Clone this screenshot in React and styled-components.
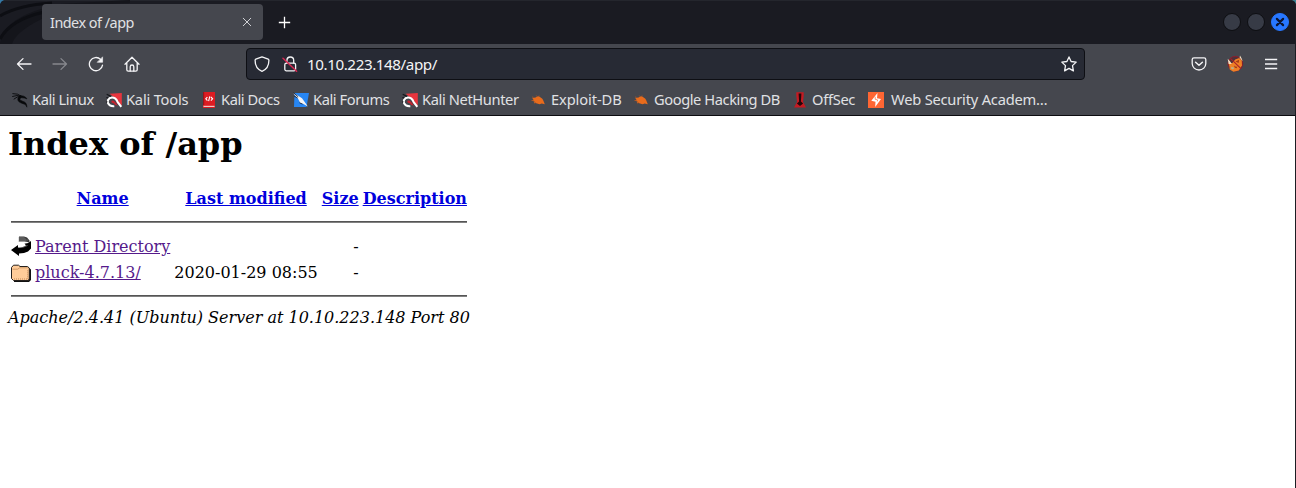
import React from "react";
import styled, { createGlobalStyle } from "styled-components";

const GlobalStyle = createGlobalStyle`
  *, *::before, *::after { box-sizing: border-box; }
  body { margin: 0; background: #fff; overflow: hidden; }
`;

const Browser = styled.div`
  display: flex;
  flex-direction: column;
  height: 488px;
  border-right: 1px solid #1c1d23;
  background: #fff;
  font-family: "Noto Sans", "Open Sans", sans-serif;
  color: #e0e1e4;
`;

const TitleBar = styled.header`
  display: flex;
  align-items: flex-start;
  height: 44px;
  padding: 4px 6px 0 42px;
  background: #1a1b22;
  border-top: 1px solid #24262d;
  position: relative;
`;

const Backdrop = styled.svg`
  position: absolute;
  left: 0;
  top: -1px;
`;

const CornerRight = styled.svg`
  position: absolute;
  right: -1px;
  top: -1px;
`;

const Tab = styled.div`
  position: relative;
  display: flex;
  align-items: center;
  justify-content: space-between;
  width: 221px;
  height: 36px;
  margin-top: -1px;
  padding: 0 10px 0 8px;
  border-radius: 4px;
  background: #45474e;
`;

const TabTitle = styled.span`
  padding-top: 1px;
  font-size: 14.4px;
  line-height: 20px;
  letter-spacing: -0.5px;
`;

const NewTab = styled.div`
  display: flex;
  margin: 11px 0 0 15px;
`;

const WindowControls = styled.div`
  display: flex;
  align-items: center;
  gap: 6px;
  margin: 8px 0 0 auto;
`;

const WindowButton = styled.span`
  display: flex;
  align-items: center;
  justify-content: center;
  width: 18px;
  height: 18px;
  border-radius: 50%;
  background: ${(p) => (p.$primary ? "#2777ff" : "#373b46")};
  border: 1px solid ${(p) => (p.$primary ? "#2777ff" : "#0d0e12")};
`;

const NavBar = styled.nav`
  display: flex;
  align-items: center;
  height: 41px;
  padding: 0 16px 1px;
  background: #45474e;
`;

const NavButtons = styled.div`
  display: flex;
  gap: 20px;
  width: 230px;
`;

const AddressBar = styled.div`
  display: flex;
  align-items: center;
  width: 839px;
  height: 32px;
  padding: 0 7px;
  border: 1px solid #0e0f14;
  border-radius: 4px;
  background: #272a34;
`;

const SiteIcons = styled.div`
  display: flex;
  gap: 12px;
  width: 53px;
`;

const Address = styled.span`
  flex: 1;
  font-size: 15.2px;
  line-height: 20px;
  letter-spacing: -0.42px;
  color: #f4f4f6;
`;

const ToolbarActions = styled.div`
  display: flex;
  align-items: center;
  gap: 19px;
  margin-left: auto;
`;

const BookmarkBar = styled.div`
  display: flex;
  align-items: center;
  height: 31px;
  padding: 0 0 1px 12px;
  border-bottom: 1px solid #0c0c10;
  background: #45474e;
`;

const Bookmark = styled.div`
  display: flex;
  flex: none;
  align-items: center;
  gap: ${(p) => p.$gap || 4}px;
  width: ${(p) => p.$width}px;
  font-size: 14.67px;
  line-height: 20px;
  letter-spacing: ${(p) => p.$tracking || -0.42}px;
  white-space: nowrap;
  svg { flex: none; }
`;

const BookmarkLabel = styled.span`
  padding-bottom: 2px;
`;

const Page = styled.main`
  flex: 1;
  padding: 9px 8px 8px;
  background: #fff;
  color: #000;
  font-family: "DejaVu Serif", serif;
  font-size: 16px;
`;

const Heading = styled.h1`
  margin: 0 0 21.44px;
  font-size: 32px;
  font-weight: bold;
`;

const Listing = styled.table`
  border-spacing: 2px;
  border-collapse: separate;
  td, th { padding: 1px; white-space: nowrap; }
`;

const IconCell = styled.td`
  vertical-align: top;
  svg { display: block; }
`;

const RightCell = styled.td`
  text-align: right;
`;

const Link = styled.a`
  color: ${(p) => (p.$visited ? "#551a8b" : "#0000dd")};
  text-decoration: underline;
`;

const Rule = styled.hr`
  margin: 8px 0;
  height: 2px;
  border: 0;
  border-top: 1px solid #555;
  background: #808080;
`;

const Signature = styled.address`
  font-style: italic;
`;

const Svg = ({ size = 16, stroke = "#f4f4f6", children, ...rest }) => (
  <svg width={size} height={size} viewBox="0 0 16 16" fill="none" stroke={stroke} strokeWidth="1.3" strokeLinecap="round" strokeLinejoin="round" {...rest}>
    {children}
  </svg>
);

const BackIcon = () => <Svg><path d="M15 8H1.5M7 2.6 1.5 8 7 13.4" /></Svg>;
const ForwardIcon = () => <Svg stroke="#86888d"><path d="M1 8h13.5M9 2.6 14.5 8 9 13.4" /></Svg>;
const ReloadIcon = () => (
  <Svg>
    <path d="M14.5 9.1A6.6 6.6 0 1 1 12.6 3.4" />
    <path d="M14.6 1.2v5.1H9.5Z" fill="#f4f4f6" strokeWidth=".6" />
  </Svg>
);
const HomeIcon = () => (
  <Svg>
    <path d="M1 8.2 8 1.2l7 7M2.8 7v6.8q0 1.4 1.4 1.4h7.6q1.4 0 1.4-1.4V7" />
    <path d="M6.2 15v-4.2a1.8 1.8 0 0 1 3.6 0V15" />
  </Svg>
);
const ShieldIcon = () => <Svg><path d="M8 .9 14.2 3.2q.7.3.7 1.1C14.9 9.7 12 13.8 8 15.3 4 13.8 1.1 9.7 1.1 4.3q0-.8.7-1.1Z" /></Svg>;
const LockIcon = () => (
  <Svg>
    <rect x="2.8" y="7.2" width="10.8" height="7.6" rx="1.6" />
    <path d="M4.9 7V4.4a3.4 3.4 0 0 1 6.8 0V7" />
    <path d="M1 2.2 14.6 15.3" stroke="#d62852" strokeWidth="1.5" />
  </Svg>
);
const StarIcon = () => <Svg><path d="m8 .9 2.1 4.6 5.1.6-3.7 3.5.9 5.3L8 12.4l-4.4 2.5.9-5.3L.8 6.1l5.1-.6Z" /></Svg>;
const PocketIcon = () => (
  <Svg>
    <path d="M3 1.8h10q1.8 0 1.8 1.6v4.2a6.8 6.4 0 0 1-13.6 0V3.4Q1.2 1.8 3 1.8Z" />
    <path d="m4.6 6.2 3.4 3.1 3.4-3.1" strokeWidth="1.5" />
  </Svg>
);
const FoxIcon = () => (
  <svg width="18" height="18" viewBox="0 0 18 18">
    <circle cx="9.3" cy="8.7" r="7.3" fill="#4f3038" stroke="#8f1c2b" />
    <path d="M2.6 8.4 6.4 8l2.8-3.4 4-1.6 2.6 2.6.2 5-3.2 4.9-5.4 1.3L3.8 14.4l-.4-3Z" fill="#ef7f25" />
    <path d="M1.7 3.8 4 6.3 5.8 9 2.6 9ZM13.6 2.4l.4-2 1.8 3.4.8 2.5Z" fill="#f2dfc2" />
    <path d="m4.6 3.6 10.4 10" stroke="#a81f2a" strokeWidth="1.1" />
    <path d="m9.4 6.6 3.8-1.8L12.6 8ZM8 10.4l2 1.4 1.4-.4-.8 1.8-1.8-.5Z" fill="#a33a18" />
    <path d="m5.3 11.8 3 .9-1.2 1.8-2-.7Z" fill="#b7b08c" />
  </svg>
);
const MenuIcon = () => <Svg strokeLinecap="butt"><path d="M2 3.5h12.2M2 8h12.2M2 12.5h12.2" /></Svg>;
const CloseIcon = () => <Svg size={12} stroke="#d4d5d9"><path d="m3 3 10 10M13 3 3 13" /></Svg>;
const PlusIcon = () => <Svg size={13} stroke="#fff" strokeLinecap="butt" strokeWidth="1.6"><path d="M8 1v14M1 8h14" /></Svg>;
const WindowClose = () => <Svg size={10} stroke="#0c1530" strokeWidth="3.4"><path d="m3 3 10 10M13 3 3 13" /></Svg>;

const KaliIcon = () => (
  <Svg stroke="#07080a">
    <path d="M.8 1.6Q6 1.3 9.2 4.1M.6 4.4Q5.2 2.6 9 4.2M2 7q3-2.8 7-2.7" strokeWidth=".9" />
    <path d="M8.6 3.7q3-.3 5 1.5l1.4 1.7-2.6-.8Q8.4 5 7.9 7c-.3 1.9 4.3 2 5.9 4.1q1.2 1.7 1.1 4.1-.8-2.5-2.8-3.1C9 11 5.8 10 5.8 7.3 5.8 5.5 7 4 8.6 3.7Z" fill="#07080a" strokeWidth=".5" />
  </Svg>
);
const ToolsIcon = () => (
  <svg width="16" height="16" viewBox="0 0 16 16">
    <path d="M3.6 1.8 15.8 1v12.4L11 8.5 7 4.4Z" fill="#e8353e" />
    <path d="M10 6.5q2 1 2.6 3.5l2.6 4.4-5-4Z" fill="#b71d28" />
    <path d="M8.3 14.2Q3.4 14.6 2 11.2 1 8 3.7 6.2q2.7-1.7 5.4.2 1.8 1.4 2.6 3.8l3.6 4.6" fill="none" stroke="#fff" strokeWidth="2" />
    <path d="M5.4 8.8q2-.8 3.4.9l3 3.7-2.7-.4-1-1.5q-1.6-.3-2.7-1.3Z" fill="#c9212d" />
    <path d="m.7 2.2 4.2 2.2M.4 5.7l1.8.2M.2 10.5l1-1.2" stroke="#17181c" strokeWidth="1.2" />
  </svg>
);
const DocsIcon = () => (
  <svg width="16" height="16" viewBox="0 0 16 16">
    <path d="M2 0h12v16H2Z" fill="#dc1c22" />
    <path d="M2 0h1.2v13H2Z" fill="#9b1218" />
    <path d="M2.5 13.8h11v1.2h-11Z" fill="#f0c7c8" />
    <path d="M6.4 5 4.8 6.8l1.6 1.8M9.9 5l1.7 1.8-1.7 1.8M8.8 4.4 7.6 9.2" fill="none" stroke="#fff" strokeWidth="1.1" />
  </svg>
);
const ForumsIcon = () => (
  <svg width="16" height="16" viewBox="0 0 16 16">
    <path d="M1.5 1H16l-2.5 14H1Z" fill="#2786f3" />
    <path d="M.2 1.4 4 3l5 3.3 2 2.6 3.8 5.7-4.3-2.7-3.2-1-2.2-4.2Z" fill="#f4f4f5" />
    <path d="m.4.8 4.8 4M1 4l3.6 2M6.5 10.8l3 1.3" stroke="#202632" strokeWidth=".9" />
  </svg>
);
const BugIcon = () => (
  <svg width="16" height="16" viewBox="0 0 16 16">
    <path d="M2 5.4q3 .8 5.1-1 1.5-.8 3.2.8 2.6 1.3 3 3.2l1.5 3.9-3-.8-2.3.8-2.4-.8-3.4-.9 1-1.1-3.2-.8 1.9-1Z" fill="#e86b1c" />
    <path d="m2 4.4 2 1.2M6 3l1 2M9 3l.4 1.6M1 8.6l3-.4M4 12l2-1.6" stroke="#8d5133" strokeWidth=".6" />
  </svg>
);
const OffSecIcon = () => (
  <svg width="16" height="16" viewBox="0 0 16 16">
    <path d="M4.3.2h7.4v3.2L11 10l3 5.5H2L5 10l-.7-6.6Z" fill="#c41a22" />
    <path d="M6.6 1.4h2.8l-.5 8.2 2.2 1.8L8 14l-3.1-2.6 2.2-1.8Z" fill="#250609" />
  </svg>
);
const AcademyIcon = () => (
  <svg width="16" height="16" viewBox="0 0 16 16">
    <path d="M0 0h16v16H0Z" fill="#ff6633" />
    <path d="M9.5 1 9 6.2l4 .9L7.2 15l.3-5.2-4.2-1Z" fill="#fff" />
    <path d="M7.2 4.7v2.6l2.4.6-.3 1.5" fill="none" stroke="#ff6633" strokeWidth=".7" />
  </svg>
);

const ParentIcon = () => (
  <svg width="20" height="22" viewBox="0 0 20 22">
    <path d="M8 1.5h5l3 1 2.5 3V8l-2-1-3-.4H8Z" fill="#383838" />
    <path d="M8 2v5M10 2v4M12 2v4M14 3v3M8 3h6M8 5h9" stroke="#8b8b8b" strokeWidth=".5" />
    <path d="M13.5 8.5Q17 9 20 6v7.5l-3 3-4 1.5-5 .5V21L0 15l7-5v2.5q4.5.5 8-2Z" fill="#000" />
    <path d="M7.5 12.5q5 .3 9-2" fill="none" stroke="#bbb" strokeWidth=".5" />
  </svg>
);
const FolderIcon = () => (
  <svg width="20" height="22" viewBox="0 0 20 22">
    <path d="M3 6h14l3 2.5V19l-2 2H3Z" fill="#111" />
    <path d="M.5 6.5 2.5 4.2h5L9 5.5h7.5L18.3 7v11L17 19.5H2.5L.5 17.5Z" fill="#ffcc99" stroke="#26211d" />
    <path d="M1.5 8.2h5.2l2-1.4H17" fill="none" stroke="#c18b58" strokeWidth=".8" />
    <path d="M3 18h13.7V9" fill="none" stroke="#af7444" strokeWidth=".8" strokeDasharray="1 1" />
  </svg>
);

const bookmarks = [
  { label: "Kali Linux", Icon: KaliIcon, width: 94 },
  { label: "Kali Tools", Icon: ToolsIcon, width: 95, tracking: -0.2 },
  { label: "Kali Docs", Icon: DocsIcon, width: 92 },
  { label: "Kali Forums", Icon: ForumsIcon, width: 109 },
  { label: "Kali NetHunter", Icon: ToolsIcon, width: 128, tracking: -0.38 },
  { label: "Exploit-DB", Icon: BugIcon, width: 103, gap: 5, tracking: -0.1 },
  { label: "Google Hacking DB", Icon: BugIcon, width: 159, gap: 5 },
  { label: "OffSec", Icon: OffSecIcon, width: 76, tracking: -0.3 },
  { label: "Web Security Academ…", Icon: AcademyIcon, width: 190, gap: 7, tracking: -0.2 },
];

const columns = ["Name", "Last modified", "Size", "Description"];

export default function App() {
  return (
    <>
      <GlobalStyle />
      <Browser>
        <TitleBar>
          <Backdrop width="130" height="44" viewBox="0 0 130 44">
            <path d="M0 43Q3 16 60 4L130 0v3Q65 5 34 23 15 34 12 44H0Z" fill="#14151b" />
            <path d="M0 16Q18 5 52 3M0 39Q10 20 44 12" fill="none" stroke="#0d0e13" strokeWidth="3" />
            <path d="M0 0h4Q1 1 0 4Z" fill="#3478a5" />
          </Backdrop>
          <CornerRight width="5" height="5" viewBox="0 0 5 5"><path d="M1 0h4v4Q4 1 1 0Z" fill="#398393" /></CornerRight>
          <Tab><TabTitle>Index of /app</TabTitle><CloseIcon /></Tab>
          <NewTab><PlusIcon /></NewTab>
          <WindowControls>
            <WindowButton />
            <WindowButton />
            <WindowButton $primary><WindowClose /></WindowButton>
          </WindowControls>
        </TitleBar>
        <NavBar>
          <NavButtons><BackIcon /><ForwardIcon /><ReloadIcon /><HomeIcon /></NavButtons>
          <AddressBar>
            <SiteIcons><ShieldIcon /><LockIcon /></SiteIcons>
            <Address>10.10.223.148/app/</Address>
            <StarIcon />
          </AddressBar>
          <ToolbarActions><PocketIcon /><FoxIcon /><MenuIcon /></ToolbarActions>
        </NavBar>
        <BookmarkBar>
          {bookmarks.map(({ label, Icon, width, gap, tracking }) => (
            <Bookmark key={label} $width={width} $gap={gap} $tracking={tracking}>
              <Icon />
              <BookmarkLabel>{label}</BookmarkLabel>
            </Bookmark>
          ))}
        </BookmarkBar>
        <Page>
          <Heading>Index of /app</Heading>
          <Listing>
            <tbody>
              <tr>
                <IconCell><svg width="20" height="22" /></IconCell>
                {columns.map((name) => <th key={name}><Link href="#">{name}</Link></th>)}
              </tr>
              <tr><td colSpan="5"><Rule /></td></tr>
              <tr>
                <IconCell><ParentIcon /></IconCell>
                <td><Link href="#" $visited>Parent Directory</Link></td>
                <td />
                <RightCell>-</RightCell>
                <td />
              </tr>
              <tr>
                <IconCell><FolderIcon /></IconCell>
                <td><Link href="#" $visited>pluck-4.7.13/</Link></td>
                <RightCell>2020-01-29 08:55</RightCell>
                <RightCell>-</RightCell>
                <td />
              </tr>
              <tr><td colSpan="5"><Rule /></td></tr>
            </tbody>
          </Listing>
          <Signature>Apache/2.4.41 (Ubuntu) Server at 10.10.223.148 Port 80</Signature>
        </Page>
      </Browser>
    </>
  );
}
